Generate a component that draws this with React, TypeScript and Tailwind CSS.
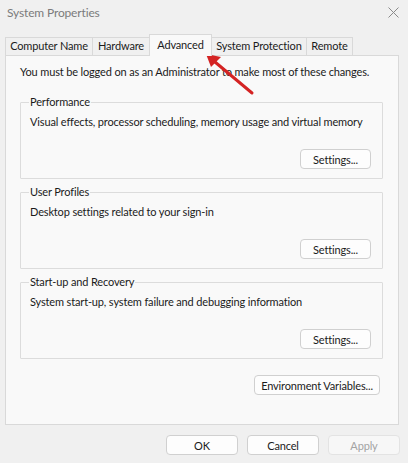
import React from 'react';

const Btn: React.FC<{ label: string; className?: string; disabled?: boolean }> = ({ label, className = '', disabled }) => (
  <button
    className={`h-[20px] rounded-[4px] border leading-none whitespace-nowrap flex items-center justify-center ${
      disabled ? 'border-[#e3e3e3] bg-[#f7f7f7] text-[#a3a3a3]' : 'border-[#d0d0d0] bg-[#fdfdfd] text-[#1b1b1b]'
    } ${className}`}
  >
    {label}
  </button>
);

const Group: React.FC<{ title: string; desc: string; className?: string }> = ({ title, desc, className = '' }) => (
  <fieldset className={`ml-[14px] w-[363px] min-w-0 h-[84px] border border-[#dcdcdc] rounded-[1px] px-[9px] ${className}`}>
    <legend className="ml-[-1px] px-[1px] leading-[14px] text-[#1b1b1b]">{title}</legend>
    <p className="mt-[5px] leading-[16px] whitespace-nowrap">{desc}</p>
    <div className="flex justify-end mt-[19px] mr-[2px]">
      <Btn label="Settings..." className="w-[71px]" />
    </div>
  </fieldset>
);

const tabs = ['Computer Name', 'Hardware', 'Advanced', 'System Protection', 'Remote'];
const tabW = ['w-[88px]', 'w-[58px]', 'w-[63px]', 'w-[96px]', 'w-[47px]'];

export default function App() {
  return (
    <div
      className="relative w-[408px] h-[463px] bg-[#f0f0f0] text-[11px] tracking-[-0.15px] text-[#1b1b1b] overflow-hidden"
      style={{ fontFamily: 'Lato, "Noto Sans", sans-serif' }}
    >
      {/* title bar */}
      <div className="h-[25px] flex items-center justify-between pl-[7px] pr-[9px]">
        <span className="text-[#7b7b7b] text-[12px]">System Properties</span>
        <svg width="11" height="11" viewBox="0 0 11 11" className="text-[#8a8a8a]">
          <path d="M0.5 0.5 L10.5 10.5 M10.5 0.5 L0.5 10.5" stroke="currentColor" strokeWidth="1" />
        </svg>
      </div>

      {/* tabs */}
      <div className="mt-[9px] ml-[5px] flex items-end h-[21px] relative z-10 whitespace-nowrap">
        {tabs.map((t, i) =>
          t === 'Advanced' ? (
            <div
              key={t}
              className={`${tabW[i]} h-[22px] -mb-px -ml-px bg-[#f9f9f9] border border-b-0 border-[#d9d9d9] flex items-start justify-center pt-[2px]`}
            >
              {t}
            </div>
          ) : (
            <div
              key={t}
              className={`${tabW[i]} h-[18px] bg-[#f0f0f0] border border-b-0 border-[#d9d9d9] ${i > 0 ? '-ml-px' : ''} flex items-center justify-center`}
            >
              {t}
            </div>
          )
        )}
      </div>

      {/* panel */}
      <div className="ml-[5px] mr-[9px] h-[370px] bg-[#f9f9f9] border border-[#d9d9d9] flex flex-col">
        <p className="pl-[14px] pt-[8px] leading-[16px] whitespace-nowrap">
          You must be logged on as an Administrator to make most of these changes.
        </p>
        <Group
          className="mt-[15px]"
          title="Performance"
          desc="Visual effects, processor scheduling, memory usage and virtual memory"
        />
        <Group className="mt-[6px]" title="User Profiles" desc="Desktop settings related to your sign-in" />
        <Group
          className="mt-[6px]"
          title="Start-up and Recovery"
          desc="System start-up, system failure and debugging information"
        />
        <div className="flex justify-end mt-[16px] mr-[18px]">
          <Btn label="Environment Variables..." className="w-[126px]" />
        </div>
      </div>

      {/* dialog buttons */}
      <div className="flex justify-end gap-[9px] mt-[10px] mr-[8px]">
        <Btn label="OK" className="w-[72px]" />
        <Btn label="Cancel" className="w-[72px]" />
        <Btn label="Apply" className="w-[72px]" disabled />
      </div>

      {/* annotation arrow */}
      <svg className="absolute left-0 top-0 pointer-events-none" width="408" height="463">
        <line x1="252" y1="93" x2="215" y2="62" stroke="#d42323" strokeWidth="3" strokeLinecap="round" />
        <polygon points="206,54 221,57 211,67" fill="#d42323" />
      </svg>
    </div>
  );
}
